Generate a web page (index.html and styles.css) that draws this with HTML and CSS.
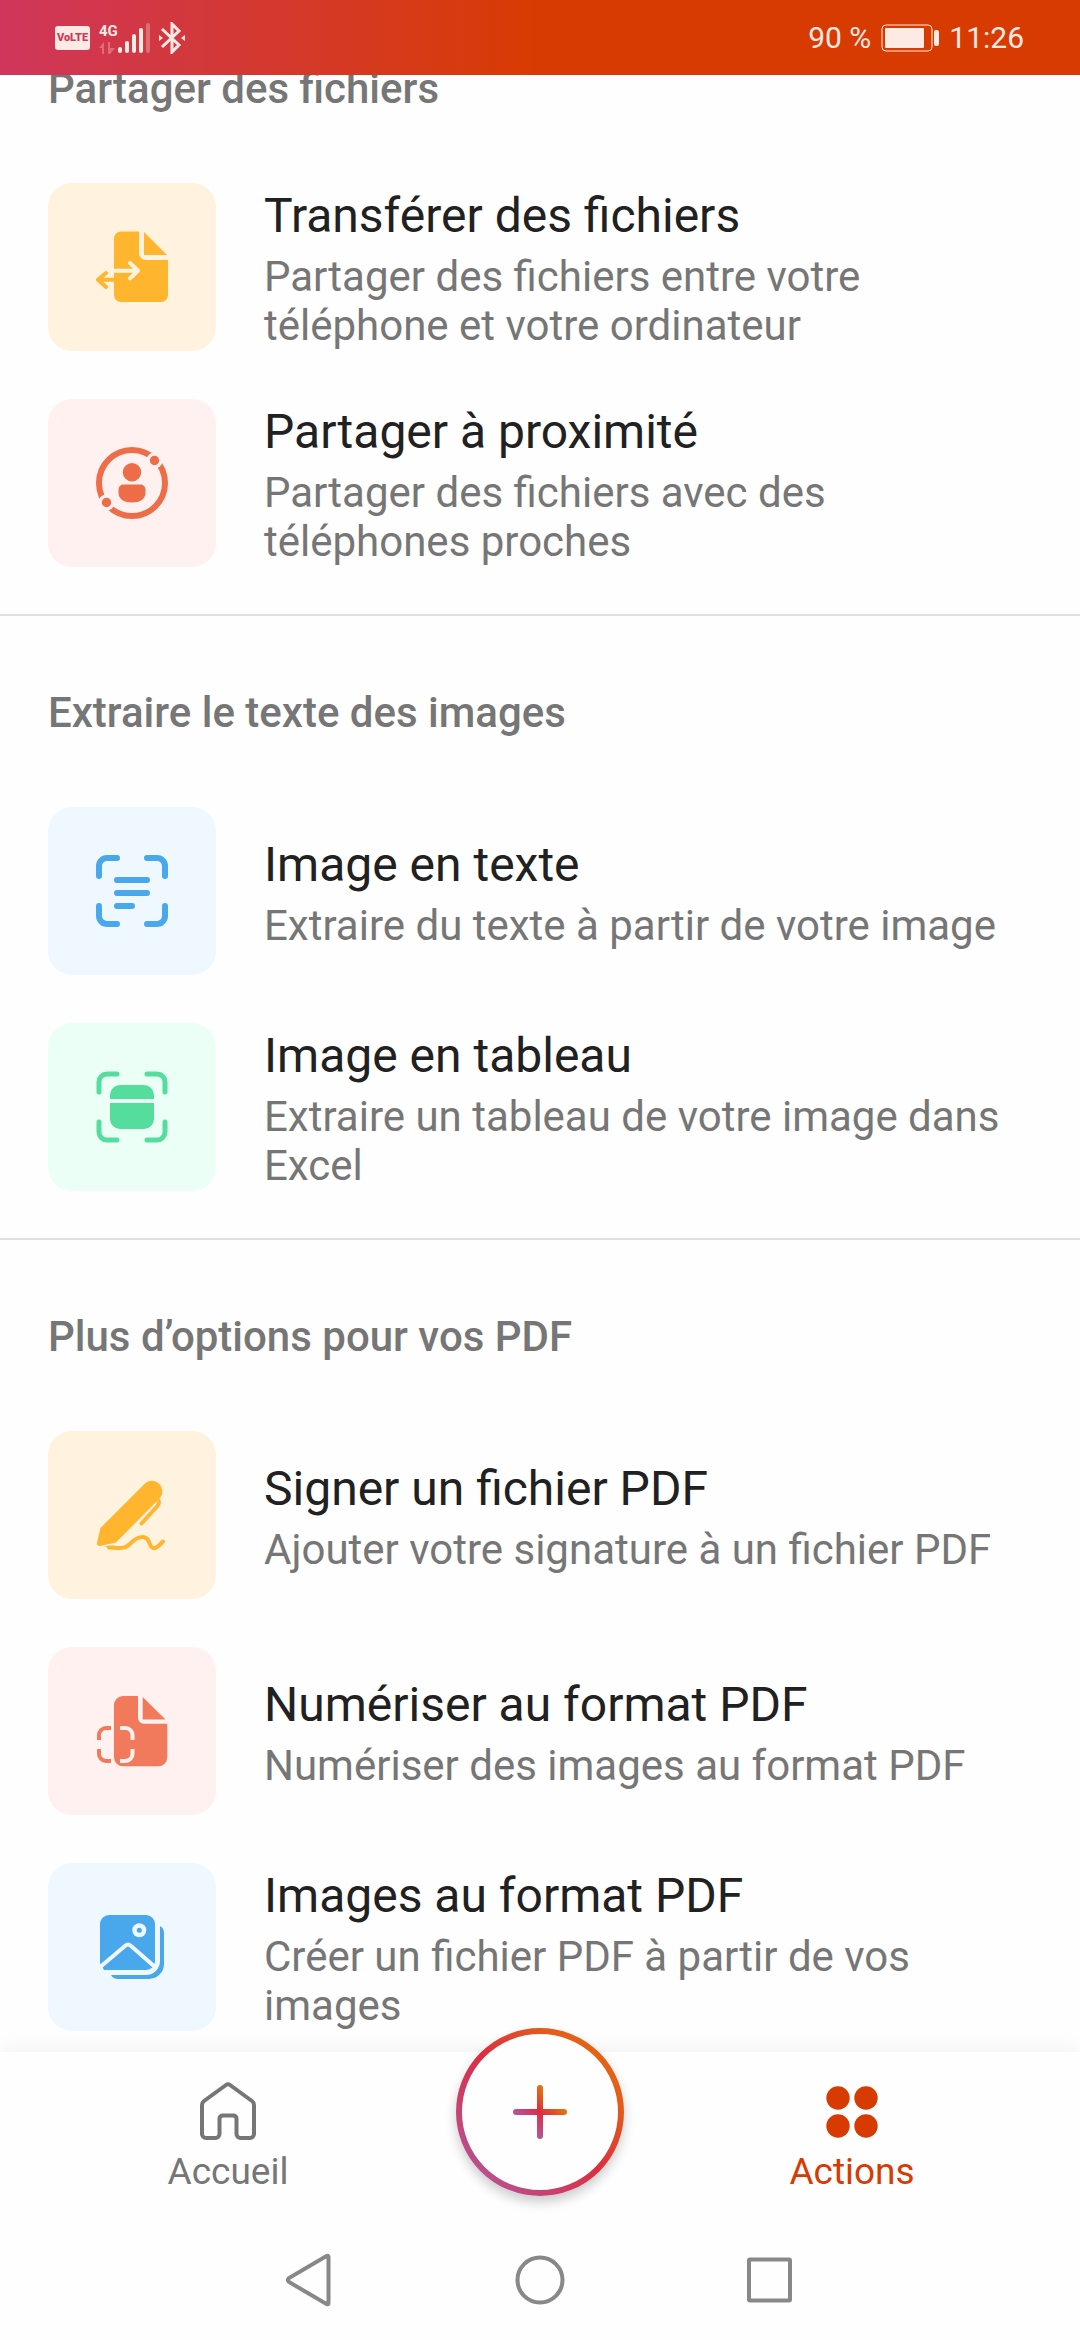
FILE: index.html
```html
<!DOCTYPE html>
<html lang="fr">
<head>
<meta charset="utf-8">
<meta name="viewport" content="width=device-width, initial-scale=1">
<title>Actions</title>
<link rel="stylesheet" href="styles.css">
</head>
<body>
<div class="app">
  <header class="status">
    <div class="status-group">
      <span class="volte">VoLTE</span>
      <span class="network">
        <span class="network-type">4G</span>
        <svg class="traffic" viewBox="0 0 16 12" aria-hidden="true"><path d="M0 6 5 0v12H3V6zM9 0h2v6h5l-5 6H9z"/></svg>
      </span>
      <svg class="signal" viewBox="0 0 32 32" aria-hidden="true"><rect x="0" y="25" width="4" height="6" rx="2"/><rect x="7" y="19" width="4" height="12" rx="2"/><rect x="14" y="12" width="4" height="19" rx="2"/><rect x="21" y="6" width="4" height="25" rx="2"/><rect class="faint" x="28" y="1" width="4" height="30" rx="2"/></svg>
      <svg class="bluetooth" viewBox="0 0 26 32" aria-hidden="true"><path class="line" d="M3 7l17 16-7 7V2l7 7L3 25"/><path d="M0 13l4 3-4 3zM26 13l-4 3 4 3z"/></svg>
    </div>
    <div class="status-group status-right">
      <span>90 %</span>
      <svg class="battery" viewBox="0 0 58 28" aria-hidden="true"><rect class="line" x="1" y="1" width="50" height="26" rx="4"/><rect x="4" y="4" width="39" height="20" rx="1"/><rect x="53" y="6" width="5" height="16" rx="2"/></svg>
      <span>11:26</span>
    </div>
  </header>

  <main class="content">
    <section class="section scrolled">
      <h2 class="heading">Partager des fichiers</h2>
      <div class="rows">
        <a class="row" href="#transfer">
          <span class="tile amber"><svg class="icon" viewBox="0 0 72 72" aria-hidden="true">
            <path d="M25 0.5H43V22a7 7 0 0 0 7 7H72V64a7 7 0 0 1-7 7H25a7 7 0 0 1-7-7V7.500a7 7 0 0 1 7-7zM48 1v23h23z"/>
            <path class="cut" d="M18 39.700H41M34 32l8 7.700-8 7.700"/>
            <path class="ink" d="M18 48.700H3M10 42l-8 6.700 8 7.300"/></svg></span>
          <span class="text"><span class="title">Transférer des fichiers</span><span class="sub">Partager des fichiers entre votre téléphone et votre ordinateur</span></span>
        </a>
        <a class="row" href="#nearby">
          <span class="tile coral"><svg class="icon" viewBox="0 0 72 72" aria-hidden="true">
            <circle class="ink ring" cx="36" cy="36" r="33"/>
            <circle class="back" cx="58.500" cy="13.500" r="8"/><circle class="back" cx="10.500" cy="55.500" r="8"/>
            <circle cx="58.500" cy="13.500" r="4.700"/><circle cx="10.500" cy="55.500" r="4.700"/>
            <circle cx="36" cy="25.300" r="9.200"/>
            <path d="M27.500 37.500h17a5 5 0 0 1 5 5v3c0 7-6 10-13.500 10s-13.500-3-13.500-10v-3a5 5 0 0 1 5-5z"/></svg></span>
          <span class="text"><span class="title">Partager à proximité</span><span class="sub">Partager des fichiers avec des téléphones proches</span></span>
        </a>
      </div>
    </section>

    <section class="section">
      <h2 class="heading">Extraire le texte des images</h2>
      <div class="rows">
        <a class="row" href="#text">
          <span class="tile blue"><svg class="icon" viewBox="0 0 72 72" aria-hidden="true">
            <path class="ink bold" d="M3 21V11a8 8 0 0 1 8-8h10M51 3h10a8 8 0 0 1 8 8v10M69 51v10a8 8 0 0 1-8 8H51M21 69H11a8 8 0 0 1-8-8V51M21 25h30M21 38h30M21 51h15"/></svg></span>
          <span class="text"><span class="title">Image en texte</span><span class="sub">Extraire du texte à partir de votre image</span></span>
        </a>
        <a class="row" href="#table">
          <span class="tile green"><svg class="icon" viewBox="0 0 72 72" aria-hidden="true">
            <path class="ink frame" d="M3 21V11a8 8 0 0 1 8-8h10M51 3h10a8 8 0 0 1 8 8v10M69 51v10a8 8 0 0 1-8 8H51M21 69H11a8 8 0 0 1-8-8V51"/>
            <path d="M14 28v-4a10 10 0 0 1 10-10h24a10 10 0 0 1 10 10v4zM14 32h44v16a10 10 0 0 1-10 10H24a10 10 0 0 1-10-10z"/></svg></span>
          <span class="text"><span class="title">Image en tableau</span><span class="sub">Extraire un tableau de votre image dans Excel</span></span>
        </a>
      </div>
    </section>

    <section class="section">
      <h2 class="heading">Plus d’options pour vos PDF</h2>
      <div class="rows">
        <a class="row" href="#sign">
          <span class="tile amber"><svg class="icon" viewBox="0 0 72 72" aria-hidden="true">
            <path d="M49.500 4A10.500 10.500 0 0 1 64 19L20 63.500 4 67q-3.500 0-3-3.500l3.500-14.500z"/>
            <path class="ink" d="M61 20q4 3 0 7.500L45.500 44.500"/>
            <path class="ink" d="M13 68.500C30 70 31 68 36 63s14-8 17 0 5 9 14-.500"/>
            <path d="M8 67.500l10-1v4z"/></svg></span>
          <span class="text"><span class="title">Signer un fichier PDF</span><span class="sub">Ajouter votre signature à un fichier PDF</span></span>
        </a>
        <a class="row" href="#scan">
          <span class="tile coral light"><svg class="icon" viewBox="0 0 72 72" aria-hidden="true">
            <path d="M27 1H42V23a5.700 5.700 0 0 0 5.700 5.700H71.300V62.300a9 9 0 0 1-9 9H27a9 9 0 0 1-9-9V10a9 9 0 0 1 9-9zM46.700 2v22.500H69.500z"/>
            <path class="cut butt" d="M24 33h5.500a7 7 0 0 1 7 7v5M36.500 54v5a7 7 0 0 1-7 7H24"/>
            <path class="ink butt" d="M15 33h-5a7 7 0 0 0-7 7v5M3 54v5a7 7 0 0 0 7 7h5"/></svg></span>
          <span class="text"><span class="title">Numériser au format PDF</span><span class="sub">Numériser des images au format PDF</span></span>
        </a>
        <a class="row" href="#images">
          <span class="tile blue"><svg class="icon" viewBox="0 0 72 72" aria-hidden="true">
            <path d="M13 4H50a9 9 0 0 1 9 9V50a9 9 0 0 1-9 9H8L4 52V13a9 9 0 0 1 9-9z"/>
            <path d="M64 15q4 2 4 7V53A15 15 0 0 1 53 68H22q-5 0-7-4H50A14 14 0 0 0 64 50z"/>
            <path class="cut" d="M3 57 29.500 34.500q2.500-2 5 0L59 56"/>
            <circle class="back" cx="43.300" cy="19.300" r="7"/><circle cx="43.300" cy="19.300" r="2.500"/></svg></span>
          <span class="text"><span class="title">Images au format PDF</span><span class="sub">Créer un fichier PDF à partir de vos images</span></span>
        </a>
      </div>
    </section>
  </main>

  <nav class="tabs" aria-label="Navigation">
    <a class="tab" href="#home">
      <svg class="icon" viewBox="0 0 72 72" aria-hidden="true"><path class="ink" d="M34 9q2-1.500 4 0L60 25q2 1.500 2 4V58a4 4 0 0 1-4 4H48.500a4 4 0 0 1-4-4V43q0-3.500-3.500-3.500H31q-3.500 0-3.500 3.500V58a4 4 0 0 1-4 4H14a4 4 0 0 1-4-4V29q0-2.500 2-4z"/></svg>
      <span>Accueil</span>
    </a>
    <button class="fab" type="button" aria-label="Créer">
      <svg viewBox="0 0 168 168" aria-hidden="true">
        <defs>
          <linearGradient id="brand" gradientUnits="userSpaceOnUse" x1="12" y1="156" x2="156" y2="12"><stop offset="0" stop-color="#b4569b"/><stop offset="0.500" stop-color="#dc2d41"/><stop offset="0.800" stop-color="#e25c1c"/><stop offset="1" stop-color="#e36a0f"/></linearGradient>
          <linearGradient id="plus" gradientUnits="userSpaceOnUse" x1="68" y1="100" x2="100" y2="68"><stop offset="0.100" stop-color="#b4569b"/><stop offset="0.500" stop-color="#dc2d41"/><stop offset="0.900" stop-color="#e37210"/></linearGradient>
        </defs>
        <circle cx="84" cy="84" r="81" fill="#fefefe" stroke="url(#brand)" stroke-width="6"/>
        <path d="M84 60V108M60 84H108" stroke="url(#plus)" stroke-width="6" stroke-linecap="round"/>
      </svg>
    </button>
    <a class="tab active" href="#actions" aria-current="page">
      <svg class="icon" viewBox="0 0 72 72" aria-hidden="true"><circle cx="22" cy="22" r="11.700"/><circle cx="50" cy="22" r="11.700"/><circle cx="22" cy="50" r="11.700"/><circle cx="50" cy="50" r="11.700"/></svg>
      <span>Actions</span>
    </a>
  </nav>

  <div class="system">
    <button type="button" aria-label="Retour"><svg viewBox="0 0 72 72" aria-hidden="true"><path d="M54.500 13v46q0 2-2 1L15 38q-2-2 0-4L52.500 12q2-1 2 1z"/></svg></button>
    <button type="button" aria-label="Accueil système"><svg viewBox="0 0 72 72" aria-hidden="true"><circle cx="36" cy="36" r="22.500"/></svg></button>
    <button type="button" aria-label="Applications récentes"><svg viewBox="0 0 72 72" aria-hidden="true"><rect x="15" y="15.500" width="41" height="41" rx="1"/></svg></button>
  </div>
</div>
</body>
</html>
```
FILE: styles.css
```css
* { box-sizing: border-box; }

body {
  margin: 0;
  background: #fefefe;
  color: #212121;
  font-family: Roboto, "Noto Sans", sans-serif;
}

a { color: inherit; text-decoration: none; }

button {
  padding: 0;
  border: 0;
  background: none;
  font: inherit;
}

svg { display: block; flex: none; }

.app {
  display: flex;
  flex-direction: column;
  height: 100vh;
  overflow: hidden;
}

/* Status bar */
.status {
  position: relative;
  z-index: 1;
  display: flex;
  flex: none;
  align-items: center;
  justify-content: space-between;
  height: 75px;
  padding: 0 56px 0 55px;
  background: linear-gradient(90deg, #d0365c, #d83b01 50%);
  color: #fdeae5;
  font-size: 30px;
  line-height: 36px;
}

.status svg { fill: currentColor; }
.status .line { fill: none; stroke: currentColor; }

.status-group { display: flex; align-items: center; }
.status-right { gap: 10px; }

.volte {
  width: 35px;
  border-radius: 3px;
  background: #fdeae5;
  color: #cf3a55;
  font-size: 11px;
  font-weight: 900;
  line-height: 24px;
  text-align: center;
}

.network { margin-left: 9px; }

.network-type {
  display: block;
  font-size: 15px;
  font-weight: 700;
  line-height: 18px;
}

.traffic { width: 16px; height: 12px; margin-top: 2px; opacity: 0.3; }
.signal { width: 32px; height: 32px; }
.signal .faint { opacity: 0.3; }
.bluetooth { width: 26px; height: 32px; margin-left: 9px; }
.bluetooth .line { stroke-width: 3px; }
.battery { width: 58px; height: 28px; }

/* Scrolled list of actions */
.content {
  flex: 1;
  min-height: 0;
  overflow: hidden;
}

.section { padding: 72px 48px 47px; }
.section + .section { border-top: 2px solid #e0e0e0; }
.scrolled { margin-top: -83px; }

.heading {
  margin: 0 0 70px;
  color: #767676;
  font-size: 42px;
  font-weight: 500;
  line-height: 49px;
}

.rows { display: grid; gap: 48px; }

.row {
  display: flex;
  align-items: center;
  gap: 48px;
}

.tile {
  display: grid;
  flex: none;
  place-items: center;
  width: 168px;
  height: 168px;
  border-radius: 24px;
  background: var(--back);
  color: var(--ink);
}

.amber { --back: #fff3df; --ink: #ffb52e; }
.coral { --back: #fff1ef; --ink: #ec6d47; }
.coral.light { --ink: #f07a5b; }
.blue { --back: #f0f8ff; --ink: #49a7ec; }
.green { --back: #ebfff7; --ink: #55dd9d; }

.icon {
  width: 72px;
  height: 72px;
  fill: currentColor;
}

.icon .ink,
.icon .cut {
  fill: none;
  stroke: currentColor;
  stroke-width: 4px;
  stroke-linecap: round;
  stroke-linejoin: round;
}

.icon .cut { stroke: var(--back); }
.icon .back { fill: var(--back); }
.icon .butt { stroke-linecap: butt; }
.icon .frame { stroke-width: 5px; }
.icon .bold,
.icon .ring { stroke-width: 6px; }

.text {
  display: grid;
  flex: 1;
  gap: 8px;
  padding-top: 4px;
}

.title { font-size: 48px; line-height: 56px; }

.sub {
  color: #767676;
  font-size: 42px;
  line-height: 49px;
}

/* Bottom tabs */
.tabs {
  position: relative;
  z-index: 1;
  display: grid;
  flex: none;
  grid-template-columns: 1fr 168px 1fr;
  align-items: start;
  padding-bottom: 27px;
  background: #fefefe;
  box-shadow: 0 -4px 20px rgba(0, 0, 0, 0.05);
}

.tab {
  display: grid;
  justify-items: center;
  gap: 3px;
  padding-top: 24px;
  color: #767676;
  font-size: 37px;
  line-height: 42px;
}

.active { color: #d83b01; }

.fab {
  width: 168px;
  height: 168px;
  margin: -24px 0;
  border-radius: 50%;
  box-shadow: 0 6px 12px rgba(0, 0, 0, 0.2);
}

/* System navigation */
.system {
  position: relative;
  z-index: 1;
  display: flex;
  flex: none;
  align-items: center;
  justify-content: center;
  gap: 158px;
  height: 120px;
  background: #fefefe;
}

.system svg {
  width: 72px;
  height: 72px;
  fill: none;
  stroke: #888888;
  stroke-width: 4px;
}

.fab,
.system button { position: relative; z-index: 2; }
```
